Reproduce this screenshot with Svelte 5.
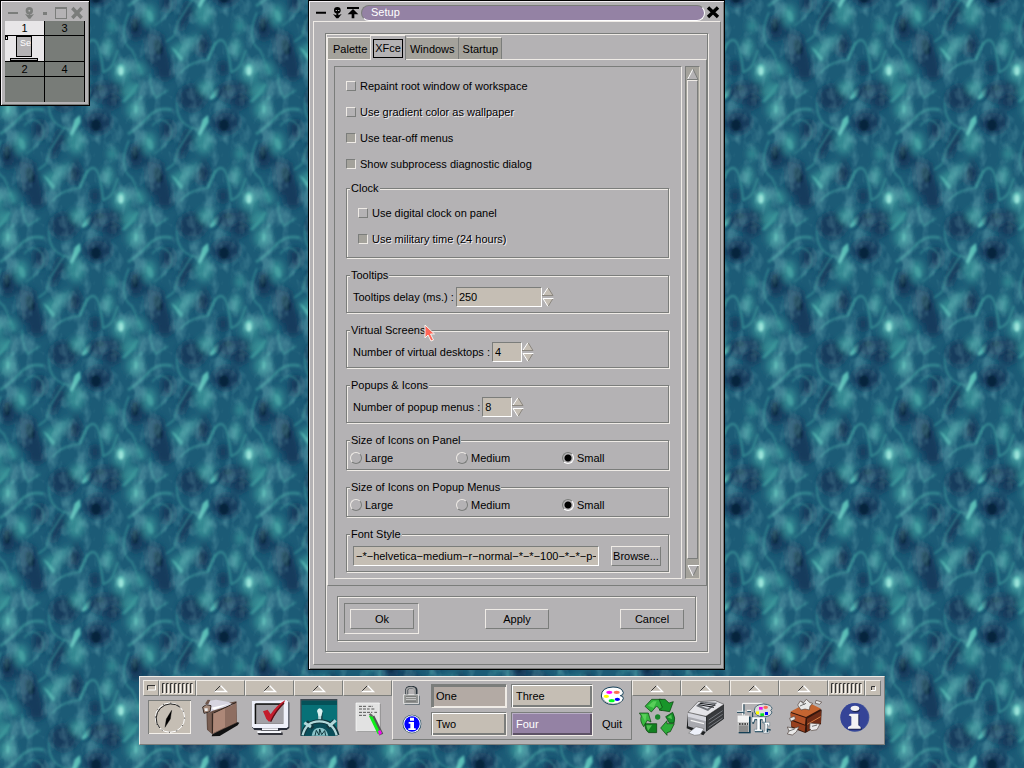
<script>
  const tabs = ['Palette', 'XFce', 'Windows', 'Startup'];
  let activeTab = $state('XFce');

  let options = $state([
    { label: 'Repaint root window of workspace', on: false, embossed: false },
    { label: 'Use gradient color as wallpaper', on: false, embossed: true },
    { label: 'Use tear-off menus', on: true, embossed: false },
    { label: 'Show subprocess diagnostic dialog', on: true, embossed: false }
  ]);
  let clock = $state([
    { label: 'Use digital clock on panel', on: false, embossed: false },
    { label: 'Use military time (24 hours)', on: true, embossed: true }
  ]);
  let spins = $state([
    { id: 'delay', legend: 'Tooltips', label: 'Tooltips delay (ms.) :', value: 250, wide: true },
    { id: 'desks', legend: 'Virtual Screens', label: 'Number of virtual desktops :', value: 4, wide: false },
    { id: 'menus', legend: 'Popups & Icons', label: 'Number of popup menus :', value: 8, wide: false }
  ]);
  const sizes = ['Large', 'Medium', 'Small'];
  let sizeGroups = $state([
    { id: 'panel', legend: 'Size of Icons on Panel', value: 'Small' },
    { id: 'popup', legend: 'Size of Icons on Popup Menus', value: 'Small' }
  ]);
  let font = $state('−*−helvetica−medium−r−normal−*−*−100−*−*−p−*');
  let screen = $state('Four');
  const tiles = [-128, 0, 128];
</script>

{#snippet check(item)}
  <label class="check" class:embossed={item.embossed}>
    <input type="checkbox" bind:checked={item.on} />{item.label}
  </label>
{/snippet}

{#snippet popup(name)}
  <button class="strip pop" aria-label={name}>
    <svg width="16" height="9" viewBox="0 0 16 9"><path d="M1.5 7.5L7.500 1.500" stroke="#333" fill="none" /><path d="M7.500 1.500L13.500 7.500H1.500" stroke="#fff" stroke-width="1.300" fill="none" /></svg>
  </button>
{/snippet}

{#snippet grip()}
  <div class="strip grip"><svg width="32" height="11" viewBox="0 0 32 11">
    {#each [0, 1, 2, 3, 4, 5, 6, 7] as i}
      <path d="M{i * 4 + 0.5} 10V.5h2" stroke="#333" fill="none" /><path d="M{i * 4 + 2.5} 1v9.500h-2" stroke="#f6f2ec" fill="none" />
    {/each}
  </svg></div>
{/snippet}

<main class="desktop">
  <svg class="wallpaper" aria-hidden="true">
    <defs>
      <filter id="soft" x="-20%" y="-20%" width="140%" height="140%"><feGaussianBlur stdDeviation="3.4" /></filter>
      <filter id="fine" x="-20%" y="-20%" width="140%" height="140%"><feGaussianBlur stdDeviation="1.3" /></filter>
      <filter id="ripple" x="0" y="0" width="100%" height="100%">
        <feTurbulence type="fractalNoise" baseFrequency=".07 .05" numOctaves="3" seed="4" stitchTiles="stitch" />
        <feColorMatrix values="0 0 0 0 .26  0 0 0 0 .62  0 0 0 0 .64  3.2 0 0 0 -1.45" />
      </filter>
      <g id="water">
        <g filter="url(#soft)">
          <g fill="#123a5c">
            <ellipse cx="8" cy="22" rx="14" ry="12" /><ellipse cx="46" cy="56" rx="8" ry="13" />
            <path d="M54 58L72 62 82 92 76 108 58 90Z" /><path d="M114 58L121 72 118 84 104 82Z" />
            <ellipse cx="102" cy="126" rx="14" ry="13" /><path d="M97 26L104 38 92 60 86 56Z" />
            <ellipse cx="78" cy="30" rx="7" ry="11" /><ellipse cx="16" cy="120" rx="18" ry="10" />
            <ellipse cx="75" cy="101" rx="9" ry="7" /><ellipse cx="22" cy="2" rx="8" ry="7" /><ellipse cx="5" cy="96" rx="5" ry="8" />
          </g>
          <g fill="#348a93">
            <path d="M80 76L110 60 92 92Z" /><ellipse cx="59" cy="43" rx="7" ry="11" /><ellipse cx="114" cy="42" rx="9" ry="12" />
            <ellipse cx="32" cy="100" rx="10" ry="11" /><ellipse cx="45" cy="10" rx="9" ry="10" /><ellipse cx="18" cy="76" rx="6" ry="10" />
            <ellipse cx="40" cy="118" rx="10" ry="7" transform="rotate(-40 40 118)" /><ellipse cx="22" cy="54" rx="5" ry="7" />
            <ellipse cx="117" cy="116" rx="9" ry="8" /><ellipse cx="50" cy="97" rx="5" ry="8" transform="rotate(-25 50 97)" />
          </g>
        </g>
        <g filter="url(#fine)" fill="#041c30" opacity=".75">
          <ellipse cx="6" cy="25" rx="5" ry="6" /><ellipse cx="45" cy="53" rx="3" ry="7" />
          <ellipse cx="68" cy="75" rx="4" ry="8" transform="rotate(-15 68 75)" /><ellipse cx="24" cy="127" rx="3" ry="4" />
          <ellipse cx="112" cy="74" rx="3" ry="5" opacity=".5" /><ellipse cx="10" cy="116" rx="4" ry="3" opacity=".6" />
        </g>
        <g filter="url(#fine)" fill="none" stroke="#3f9c9e" stroke-width="1.800" opacity=".62">
          <path d="M-10 88Q-4 68 3 68T13 100Q20 98 23 92L28 78" stroke-width="2.400" /><path d="M38 34Q48 28 58 17T82 10" stroke-width="3" />
          <path d="M39 40Q33 54 34 64T42 78L52 102" /><path d="M87 2Q86 14 92 21T107 29L111 38" />
          <path d="M90 102Q98 90 118 88L126 70" /><path d="M60 102Q60 116 66 126L78 118" />
          <path d="M34 130L48 112M42 138L52 124" stroke-width="3" /><path d="M76 70L84 64 88 50 102 28" />
          <path d="M62 26Q72 14 80 26T64 54" stroke-width="1.300" /><path d="M32 2L46 -10" />
        </g>
        <g filter="url(#fine)" fill="#5cc0b8">
          <path d="M118 15L119 22 110 36 108 34 113 19Z" /><ellipse cx="125" cy="122" rx="2.500" ry="7" transform="rotate(42 125 122)" />
          <ellipse cx="31" cy="98" rx="4" ry="6" /><ellipse cx="31" cy="99" rx="2" ry="4" fill="#a4eee0" /><ellipse cx="46" cy="9" rx="2" ry="4" opacity=".7" />
          <ellipse cx="60" cy="44" rx="3" ry="6" transform="rotate(-20 60 44)" opacity=".4" /><path d="M81 75L86 78 93 86 91 90Z" opacity=".7" />
        </g>
      </g>
      <pattern id="tile" x="90" y="100" width="128" height="128" patternUnits="userSpaceOnUse">
        <rect width="128" height="128" fill="#1c5b76" />
        {#each tiles as x}{#each tiles as y}<use href="#water" {x} {y} />{/each}{/each}
        <rect width="128" height="128" filter="url(#ripple)" opacity=".3" />
      </pattern>
    </defs>
    <rect width="100%" height="100%" fill="url(#tile)" />
  </svg>

  <section class="window pager" aria-label="Pager">
    <div class="pager-title">
      <svg width="80" height="18" viewBox="15 9 240 54" fill="#7b7d7b">
        <path d="M24 36h30v6H24zM129 36h12v9h-12z" /><circle cx="88" cy="32" r="11" /><path d="M75 42l11 3v-6h5v6l11-3-11 14h-5z" /><circle cx="88" cy="32" r="3" fill="#b4b2b4" />
        <path d="M165 21h36v36h-36zM168 27v27h30V27z" fill-rule="evenodd" /><path d="M217 24l28 30M245 24l-28 30" stroke="#7b7d7b" stroke-width="10" />
      </svg>
    </div>
    <div class="screens">
      <span class="num on">1</span><span class="num">3</span>
      <div class="view on">
        <i class="dot"></i><i class="mini">Se</i><i class="dock"></i>
      </div><div class="view"></div>
      <span class="num">2</span><span class="num">4</span>
      <div class="view"></div><div class="view"></div>
    </div>
  </section>

  <section class="window setup" aria-label="Setup">
    <header class="title">
      <svg width="48" height="18" viewBox="24 9 144 54" aria-hidden="true">
        <path d="M33 35h30v6H33zM126 21h36v6h-36z" /><circle cx="97" cy="31" r="10" /><path d="M84 42l10 4v-6h6v6l10-4-10 13h-6zM144 27l16 16h-12v12h-8V43h-12z" /><path d="M92 30h4v3h-4zM99 30h4v3h-4z" fill="#b4b2b4" />
      </svg>
      <h1>Setup</h1>
      <button class="close" aria-label="Close"><svg width="14" height="14" viewBox="0 0 14 14"><path d="M2 2.500L12 12M12 2.500L2 12" stroke="#000" stroke-width="3.400" /></svg></button>
    </header>
    <div class="pane">
      <div class="etched shell">
        <div class="tabs" role="tablist">
          {#each tabs as t}
            <button role="tab" class="tab" class:active={t === activeTab} aria-selected={t === activeTab} onclick={() => (activeTab = t)}><span>{t}</span></button>
          {/each}
        </div>
        <div class="page">
          <div class="view-frame">
            {#each options as item}{@render check(item)}{/each}
            <div class="groups">
              <fieldset class="etched indent">
                <legend>Clock</legend>
                {#each clock as item}{@render check(item)}{/each}
              </fieldset>
              {#each spins as s}
                <fieldset class="etched">
                  <legend>{s.legend}</legend>
                  <div class="spin">
                    <label for={s.id}>{s.label}</label>
                    <input id={s.id} class="text" class:wide={s.wide} type="text" inputmode="numeric" bind:value={s.value} />
                    <div class="arrows">
                      <button aria-label="Increase" onclick={() => s.value++}><svg width="12" height="10" viewBox="0 0 12 10"><path d="M1 9L6 .5 11 9Z" fill="#c5beb4" /><path d="M.8 8.500L6 .5" stroke="#fff" /><path d="M6 .5L11 8.500H0" stroke="#8b877f" fill="none" /></svg></button>
                      <button aria-label="Decrease" onclick={() => s.value--}><svg width="12" height="10" viewBox="0 0 12 10"><path d="M1 1L6 9.500 11 1Z" fill="#c5beb4" /><path d="M6 9.500L11 1.500" stroke="#8b877f" /><path d="M11.500 1.500H1L6 9.500" stroke="#fff" fill="none" /></svg></button>
                    </div>
                  </div>
                </fieldset>
              {/each}
              {#each sizeGroups as g}
                <fieldset class="etched radios">
                  <legend>{g.legend}</legend>
                  <div class="row">
                    {#each sizes as s}
                      <label><input type="radio" name={g.id} value={s} bind:group={g.value} />{s}</label>
                    {/each}
                  </div>
                </fieldset>
              {/each}
              <fieldset class="etched">
                <legend>Font Style</legend>
                <div class="font">
                  <input class="text" type="text" aria-label="Font Style" bind:value={font} />
                  <button class="push">Browse...</button>
                </div>
              </fieldset>
            </div>
          </div>
          <div class="scroll">
            <button aria-label="Scroll up"><svg width="12" height="12" viewBox="0 0 12 12"><path d="M1 11.500L6 1 11 11.500Z" fill="#b4b2b4" /><path d="M.8 11L6 1" stroke="#fff" /><path d="M6 1L11 11.500H0" stroke="#7b7d7b" fill="none" /></svg></button>
            <div class="thumb"></div>
            <button aria-label="Scroll down"><svg width="12" height="12" viewBox="0 0 12 12"><path d="M1 .5L6 11 11 .5Z" fill="#b4b2b4" /><path d="M6 11L11.200 .5" stroke="#7b7d7b" /><path d="M12 .5H1L6 11" stroke="#fff" fill="none" /></svg></button>
          </div>
        </div>
        <div class="etched actions">
          <div class="slot default"><button class="push">Ok</button></div>
          <div class="slot"><button class="push">Apply</button></div>
          <div class="slot"><button class="push">Cancel</button></div>
        </div>
      </div>
    </div>
  </section>

  <div class="dock-area">
    <nav class="panel" aria-label="Panel">
      <div class="side">
        <div class="strips">
          <button class="strip first" aria-label="Iconify"><svg width="9" height="6" viewBox="0 0 9 6"><path d="M.5 5V.5H8" stroke="#333" fill="none" /><path d="M8.500 .5v4.500H1" stroke="#fff" fill="none" /></svg></button>
          {@render grip()}
          {@render popup('Files menu')}{@render popup('Settings menu')}{@render popup('Network menu')}{@render popup('Editor menu')}
        </div>
        <div class="launchers">
          <button aria-label="Clock"><svg width="52" height="44" viewBox="24 75 156 132">
            <path d="M39 87h129v102H39z" fill="#7b7d7b" /><path d="M42 90h126v99H42z" fill="#f4f0ea" /><path d="M42 90h123v96H42z" fill="#c5beb4" />
            <circle cx="105" cy="140" r="44" fill="none" stroke="#fff" stroke-width="3" /><path d="M74 171A44 44 0 0 1 136 109" fill="none" stroke="#222" stroke-width="3" /><circle cx="105" cy="140" r="44" fill="none" stroke="#222" stroke-width="3" stroke-dasharray="3 20" />
            <path d="M110 118l-16 26-4 25 16-25z" stroke="#000" />
          </svg></button>
          <button aria-label="Files"><svg width="49" height="44" viewBox="180 75 147 132">
            <path d="M232 190l70-38 11 3-5 8-54 32-24 1z" fill="#111" /><path d="M214 116l24-12 66-13 2 64-74 35-16-14z" fill="#634d43" />
            <path d="M235 126l67-30 2 57-70 34z" fill="#ad8878" /><path d="M270 110l34-14v56l-34 18z" fill="#8e6e61" /><path d="M217 120l15 6v62l-12-10z" fill="#7a5f53" />
            <path d="M205 107l16-17 22-4 38 7 14 8-62 18-12 6z" fill="#d6d4e0" /><path d="M229 110l53-12-45 18z" fill="#fff" />
            <path d="M203 108l11-7 14 3-3 18-18 5z" fill="#a48a7b" stroke="#382e29" stroke-width="3" /><path d="M210 98l8-12 8 1-6 13z" fill="#6c554a" /><path d="M208 112h10v8h-8z" fill="#eee" />
            <path d="M232 127v60M236 126l68-32" stroke="#2b201b" stroke-width="3" fill="none" />
          </svg></button>
          <button aria-label="Settings"><svg width="49" height="44" viewBox="327 75 147 132">
            <path d="M356 91l100-4 7 8v76l-8 6H358l-6-8z" fill="#262b38" /><path d="M351 90l104-3 5 4v76l-5 4H355l-4-5z" fill="#eef0fa" /><path d="M361 99h84v60h-84z" fill="#777" /><path d="M365 102h80v56h-80z" fill="#a1a0a6" />
            <path d="M361 99h84M361 99v60" stroke="#111" stroke-width="4" /><path d="M383 176h48l12 9v7h-72l-4-7z" fill="#33343b" /><path d="M381 172h48v6h-48zM367 180h72v6h-72z" fill="#f5f6fb" />
            <path d="M384 121l14-5 9 14q18-28 44-43l-5 11q-23 24-35 49l-9 5-8-8z" fill="#c41d2d" /><path d="M407 152q16-34 40-56" stroke="#541017" stroke-width="4" fill="none" />
          </svg></button>
          <button aria-label="Network"><svg width="49" height="44" viewBox="474 75 147 132">
            <path d="M496 84h111v111H496z" fill="#404850" /><path d="M500 89h106v105H500z" fill="#087177" /><path d="M500 89h106v13H500z" fill="#055158" /><path d="M500 180q10-30 50-32t56 32v14H500z" fill="#0a4d59" />
            <g fill="none" stroke="#12363e" stroke-width="13"><path d="M503 193q10-42 52-42t52 42M556 122v32M514 152l20 20M598 150l-20 20" /></g>
            <g fill="none" stroke="#b2d8da" stroke-width="7"><path d="M503 193q10-42 50-42t52 42" /><path d="M554 145v-25M528 168l-20-13M582 166l20-18" stroke-width="9" /></g>
            <path d="M546 120q2-8 8-8t9 8l-4 16h-8z" fill="#daf0f0" /><path d="M530 194q3-24 24-24t26 24" fill="#8bc3c8" /><path d="M540 194l4-16 8 14 2-18 6 17 9-12 3 15" fill="none" stroke="#10363c" stroke-width="3" />
          </svg></button>
          <button aria-label="Editor"><svg width="49" height="44" viewBox="621 75 147 132">
            <path d="M667 99h70v83h-70z" fill="#8a8a8a" /><path d="M663 96h70v83h-70z" fill="#e2e2e2" stroke="#fff" stroke-width="2" />
            <path d="M672 106h22m6 0h14M684 106M672 114h32m5 0h12M672 124h40m6 0h8M672 133h24" stroke="#555" stroke-width="3" stroke-dasharray="9 3" />
            <path d="M712 136l27 55" stroke="#555" stroke-width="13" /><path d="M706 133l26 54" stroke="#0df01a" stroke-width="9" /><path d="M701 131l5-4 8 6-3 5z" fill="#666" /><path d="M728 181l8-4 5 9-7 7z" fill="#f40cf0" />
          </svg></button>
        </div>
      </div>

      <div class="centre">
        <button class="icon" aria-label="Lock"><svg width="18" height="20" viewBox="55 43 54 60">
          <path d="M60 72h45v27H60z" fill="#2c3e48" /><path d="M57 69h45v27H57z" fill="#909290" stroke="#e6e6e6" stroke-width="3" /><path d="M66 68V54q2-7 12-7h6q10 2 10 9v12" fill="none" stroke="#27323a" stroke-width="9" /><path d="M66 68V54q2-6 12-6h4q9 1 9 8v12" fill="none" stroke="#a6a6a6" stroke-width="5" /><path d="M64 76h30M64 82h30M64 88h30" stroke="#555" stroke-width="2" /><path d="M64 78h30M64 84h30" stroke="#fff" stroke-width="2" />
        </svg></button>
        <button class="desk" class:current={screen === 'One'} class:dim={true} onclick={() => (screen = 'One')}>One</button>
        <button class="desk" class:current={screen === 'Three'} onclick={() => (screen = 'Three')}>Three</button>
        <button class="icon" aria-label="Palette"><svg width="24" height="20" viewBox="647 42 72 60">
          <path d="M651 72q0-26 35-27 27 0 31 17 0 8-9 9 9 1 9 8-3 16-31 19-33-2-35-26z" fill="#fff" stroke="#123d56" stroke-width="3" /><path d="M655 76q5 18 31 20 18 0 27-8" fill="none" stroke="#9a9a9a" stroke-width="2" />
          <ellipse cx="675" cy="61" rx="9" ry="5" fill="#f0f" /><ellipse cx="697" cy="61" rx="9" ry="5" fill="#ff7052" /><ellipse cx="666" cy="73" rx="8" ry="5" fill="#ff0" /><ellipse cx="682" cy="86" rx="9" ry="5" fill="#0f2" /><ellipse cx="699" cy="82" rx="8" ry="5" fill="#00f" />
        </svg></button>
        <button class="icon" aria-label="Information"><svg width="20" height="20" viewBox="49 127 60 60">
          <circle cx="79" cy="157" r="28" fill="#123d56" /><circle cx="79" cy="157" r="26" fill="#fff" /><circle cx="79" cy="157" r="23" fill="#00f" /><path d="M73 138h12v9H73zM69 151h16v19h5v5H68v-5h6v-14h-5z" fill="#fff" />
        </svg></button>
        <button class="desk" class:current={screen === 'Two'} onclick={() => (screen = 'Two')}>Two</button>
        <button class="desk" class:current={screen === 'Four'} onclick={() => (screen = 'Four')}>Four</button>
        <button class="icon">Quit</button>
      </div>

      <div class="side">
        <div class="strips">
          {@render popup('Trash menu')}{@render popup('Print menu')}{@render popup('Tools menu')}{@render popup('Misc menu')}
          {@render grip()}
          <button class="strip last" aria-label="Close panel"><svg width="5" height="5" viewBox="0 0 5 5"><path d="M.5 4V.5H4" stroke="#333" fill="none" /><path d="M4.500 .5v4H0" stroke="#fff" fill="none" /></svg></button>
        </div>
        <div class="launchers">
          <button aria-label="Trash"><svg width="49" height="44" viewBox="6 75 147 132">
            <g stroke="#083d0b" stroke-width="2"><path d="M45 106l20-21h28l12 6 0 20-12 8-13-14-16 18z" fill="#2fb23c" /><path d="M87 85h18l12 11 13-4-11 30-32-5 10-8z" fill="#18952a" />
            <path d="M28 126h27l8 27-11-5-11 19q-13-18-7-32z" fill="#38b840" /><path d="M45 158h35v27H56q-12-8-11-27z" fill="#128020" /><path d="M92 171l19-22v9h22l-12 24-10 3v8z" fill="#2dae39" /><path d="M107 137l21-13q10 18 4 32h-14z" fill="#15902a" /></g>
            <circle cx="83" cy="138" r="8" fill="#18852a" /><path d="M54 104l16-13h10l-9 20zM49 163h17l-12 17M34 130h16l-4 22M112 139l12-8 2 14M96 94l12 10" fill="#69da65" opacity=".7" />
          </svg></button>
          <button aria-label="Print"><svg width="49" height="44" viewBox="153 75 147 132">
            <path d="M174 127l48 8 60-35v43l-54 39-8 11-50-21z" fill="#1e2022" /><path d="M174 124l30-32 52-3 26 11-54 36z" fill="#e4e4e8" stroke="#555" stroke-width="2" /><path d="M198 105l16-13 48 3-28 25z" fill="#6e7176" /><path d="M205 101l17-6 31 5-21 13z" fill="#d9dbe2" /><path d="M206 101l46 8M210 97l46 6" stroke="#17191c" stroke-width="3" />
            <path d="M174 126l54 12v45l-54-17z" fill="#a8a9af" /><path d="M174 126l54 12v13l-54-14z" fill="#d5d6dd" /><path d="M182 148l40 10" stroke="#f5f5f5" stroke-width="4" /><path d="M230 137l52-35v40l-52 38z" fill="#383a3d" /><path d="M236 147l42-28M236 158l42-28M236 169l42-28" stroke="#777a80" stroke-width="3" />
            <path d="M176 186l22-19 24 6-12 18-16 2z" fill="#eef1fa" stroke="#777" stroke-width="2" />
          </svg></button>
          <button aria-label="Tools"><svg width="49" height="44" viewBox="300 75 147 132">
            <path d="M321 121h22m8-3h12M338 134V97h60M343 124v10M338 121h8" stroke="#fff" stroke-width="3" fill="none" /><path d="M321 124h20M352 122h11M342 100v30M368 138v-14" stroke="#164055" stroke-width="3" fill="none" />
            <path d="M373 118q1-18 28-19 25 2 25 14-8 6 0 10-2 13-24 15-29-2-29-20z" fill="#ddd" stroke="#496878" stroke-width="3" /><path d="M387 108h11v8h-11z" fill="#e30fe8" /><ellipse cx="407" cy="109" rx="7" ry="5" fill="#ff6c55" /><path d="M378 121h9v9h-9z" fill="#ff0" /><path d="M391 127h11v8h-11z" fill="#06df20" /><path d="M405 123h9v9h-9z" fill="#00f" />
            <path d="M326 137h36v50h-36z" fill="#164055" /><path d="M323 134h34v49h-34z" fill="#c9c9c9" /><path d="M323 134h34v19h-34z" fill="#f2f2f2" /><path d="M326 163h29v20h-29z" fill="#8c8c8c" /><path d="M327 159h27" stroke="#222" stroke-width="4" stroke-dasharray="5 3" />
            <path d="M367 141h41v17h-6l-3-10h-6v29h6v7h-24v-7h7v-29h-7l-3 10h-5z" fill="#164055" /><path d="M366 138h40v16h-6l-3-9h-7v30h7v6h-24v-6h8v-30h-7l-3 9h-5zM396 154h23v11h-4l-3-6v22h5v5h-17v-5h5v-22z" fill="#fff" stroke="#164055" stroke-width="1" /><path d="M412 184v-9l10 2" fill="none" stroke="#164055" stroke-width="4" />
          </svg></button>
          <button aria-label="Misc"><svg width="49" height="44" viewBox="447 75 147 132">
            <path d="M482 124l52-24 41 16-2 43-47 27-42-16z" fill="#34160c" /><path d="M481 122l53-28 39 19-45 25z" fill="#c46531" /><path d="M481 125l46 16-2 20-42-16z" fill="#b25228" /><path d="M484 149l42 15-2 19-40-17z" fill="#97401e" /><path d="M531 143l42-24v37l-42 26z" fill="#6e2c16" /><path d="M532 160l40-23" stroke="#d37b42" stroke-width="3" />
            <g fill="#e9e9e9" stroke="#50423c" stroke-width="2"><path d="M503 102l8-12 10 5 8-10 11 10 8 2-8 9-2 11-13-3-12 3z" /><path d="M558 88l17 5-6 7-13-3z" /><path d="M479 141l15-5 2 9-14 6z" /><path d="M472 168l21 4 14-5-8 16-12 9-15-3 5-9z" /><path d="M540 156l30 3-9 17-17 3-5-7z" /></g>
            <path d="M477 180l17-6M546 166l15-4M510 105l18-8M514 92l9 9" stroke="#333" stroke-width="2" />
          </svg></button>
          <button aria-label="Help"><svg width="53" height="44" viewBox="594 75 159 132">
            <circle cx="675" cy="139" r="43" fill="#46589c" /><circle cx="673" cy="139" r="42" fill="#354497" /><ellipse cx="677" cy="115" rx="13" ry="9" fill="#1c2550" /><ellipse cx="675" cy="112" rx="13" ry="8" fill="#f2f2f4" /><path d="M663 131h25v34l7 5v6h-39v-6l10-5v-25l-8-4z" fill="#1c2550" /><path d="M660 128h25v35l7 5v5h-38v-5l10-5v-26l-8-4z" fill="#f2f2f4" />
          </svg></button>
        </div>
      </div>
    </nav>
  </div>

  <svg class="cursor" width="13" height="19" viewBox="0 0 13 19" aria-hidden="true"><path d="M1 1L10.500 10H6.500L9.500 16 7 17 4 11 1 14Z" fill="#ff6456" stroke="#f5f5f0" /></svg>
</main>

<style>
  :global(body) { margin: 0; background: #1d6078; }
  .desktop {
    --face: #b4b2b4; --dark: #7b7d7b; --light: #efebe6; --sand: #c5beb4; --trough: #a4a29b; --violet: #9482a4;
    position: relative; min-height: 100vh; overflow: hidden; color: #000;
    font: 11px/12px "Liberation Sans", Arial, sans-serif;
  }
  .desktop * { box-sizing: border-box; }
  button, input { font: inherit; color: inherit; margin: 0; padding: 0; border-radius: 0; }
  button { border: 0; background: none; }
  svg { display: block; }
  .wallpaper { position: absolute; width: 100%; height: 100%; }
  .window { position: absolute; top: 0; background: var(--face); border: 1px solid #000; box-shadow: inset 1px 1px 0 #f4f0f4, inset -1px -1px 0 var(--dark); }

  .pager { left: 0; width: 90px; padding: 2px 4px 3px; }
  .pager-title { height: 18px; }
  .screens { display: grid; grid-template-columns: 1fr 1fr; }
  .num, .view { border-right: 1px solid #000; border-bottom: 1px solid #000; background: #787c78; }
  .num { height: 15px; line-height: 15px; text-align: center; }
  .view { height: 26px; }
  .view:nth-last-child(-n + 2) { height: 25px; border-bottom: 0; }
  .screens .on { background: #e8e6e8; }
  .view.on { position: relative; }
  .view i { position: absolute; font-style: normal; }
  .dot { left: 0; top: 0; width: 3px; height: 4px; border: 1px solid #000; }
  .mini { left: 11px; top: 0; width: 16px; height: 21px; border: 1px solid #000; background: var(--face); color: #fff; font-size: 9px; padding-left: 3px; overflow: hidden; }
  .dock { left: 5px; top: 22px; width: 28px; height: 3px; border: 1px solid #000; background: var(--face); }

  .setup { left: 308px; width: 417px; padding: 1px 3px 4px 4px; }
  .title { display: flex; align-items: center; height: 19px; }
  .title h1 { flex: 1; height: 16px; margin: 2px 0 0; padding-left: 9px; font: inherit; line-height: 13px; color: #fff; background: var(--violet); border: 1px solid; border-color: var(--dark) #fff #fff var(--dark); border-radius: 8px; }
  .close { width: 16px; padding-left: 1px; }
  .pane { border: 1px solid; border-color: var(--light) var(--dark) var(--dark) var(--light); padding: 11px 12px 12px 11px; }
  .etched { border: 1px solid var(--dark); box-shadow: 1px 1px 0 var(--light), inset 1px 1px 0 var(--light); }
  .shell { padding: 1px 0 10px 1px; }
  .tabs { display: flex; align-items: flex-end; height: 24px; }
  .tab { position: relative; height: 22px; padding: 0 3px; background: var(--trough); border: 1px solid; border-color: var(--light) var(--dark) transparent transparent; border-bottom: 0; }
  .tab:first-child { border-left-color: var(--light); padding-left: 5px; border-right: 0; }
  .tab.active { z-index: 1; height: 25px; margin-bottom: -1px; padding: 0 2px; background: var(--face); border-left-color: var(--light); }
  .tab.active span { display: block; border: 1px solid #000; padding: 2px 1px 3px; }
  .page { display: flex; gap: 3px; padding: 6px; border: 1px solid; border-color: var(--light) var(--dark) var(--dark) var(--light); }
  .view-frame { flex: 1; min-width: 0; padding: 6px 11px 6px; border: 1px solid; border-color: var(--dark) var(--light) var(--light) var(--dark); }
  .check { display: flex; align-items: center; gap: 4px; height: 26px; }
  .embossed { text-shadow: 1px 1px 0 #efebef; }
  input[type='checkbox'] { appearance: none; width: 10px; height: 10px; border: 1px solid; border-color: var(--light) var(--dark) var(--dark) var(--light); }
  input[type='checkbox']:checked { background: var(--trough); border-color: var(--dark) var(--light) var(--light) var(--dark); }
  .groups { display: flex; flex-direction: column; gap: 11px; margin-top: 5px; }
  fieldset { margin: 0 1px 0 0; min-width: 0; padding: 6px 7px 5px 6px; }
  .indent { padding-left: 11px; }
  legend { height: 12px; margin-left: -3px; padding: 0 1px; background: var(--face); }
  .indent legend { margin-left: -8px; }
  .spin, .font { display: flex; align-items: center; }
  .text { height: 20px; width: 30px; margin-left: 2px; padding: 0 2px; background: var(--sand); border: 1px solid; border-color: var(--dark) #fff #fff var(--dark); outline: 0; }
  .text.wide { width: 86px; }
  .font .text { flex: 1; min-width: 0; margin: 0 12px 0 0; }
  .arrows button { display: block; width: 12px; height: 10px; }
  .radios { padding-left: 3px; }
  .radios legend { margin-left: 0; }
  .row { display: grid; grid-template-columns: repeat(3, 106px); }
  .row label { display: flex; gap: 3px; }
  input[type='radio'] { appearance: none; width: 12px; height: 12px; border: 1px solid; border-radius: 50%; border-color: var(--light) var(--dark) var(--dark) var(--light); }
  input[type='radio']:checked { background: radial-gradient(circle, #000 3px, transparent 4px); border-color: var(--dark) #fff #fff var(--dark); }
  .push { height: 20px; padding: 0 2px; border: 1px solid; border-color: var(--light) var(--dark) var(--dark) var(--light); }
  .font .push { width: 50px; padding: 0; }
  .scroll { display: flex; flex-direction: column; justify-content: space-between; width: 15px; padding: 1px; background: var(--trough); border: 1px solid; border-color: var(--dark) #d4d0c6 #d4d0c6 var(--dark); }
  .scroll button { height: 12px; }
  .thumb { flex: 1; margin-bottom: 6px; background: var(--face); border: 1px solid; border-color: var(--light) var(--dark) var(--dark) var(--light); }
  .actions { display: flex; justify-content: space-between; margin: 10px 11px 0 10px; padding: 6px; }
  .slot { width: 75px; padding: 5px 5px 4px; border: 1px solid transparent; }
  .slot.default { border-color: var(--dark) var(--light) var(--light) var(--dark); }
  .slot .push { display: block; width: 64px; }

  .dock-area { position: absolute; left: 0; right: 0; bottom: 23px; display: flex; justify-content: center; }
  .panel { display: flex; padding: 3px 3px 4px; background: var(--face); border: 1px solid; border-color: var(--light) var(--dark) var(--dark) var(--light); }
  .strips, .launchers { display: flex; }
  .strip { display: grid; place-items: center; height: 16px; background: var(--sand); border: 1px solid; border-color: var(--light) var(--dark) var(--dark) var(--light); }
  .pop { width: 49px; }
  .grip { width: 37px; }
  .first { width: 16px; }
  .last { width: 16px; }
  .centre { display: grid; grid-template-columns: 38px 80px 82px 38px; row-gap: 4px; align-items: center; padding: 3px 0; border: 1px solid; border-color: var(--light) var(--dark) var(--dark) var(--light); }
  .centre .icon { display: grid; place-items: center; height: 24px; }
  .desk { height: 24px; padding-left: 4px; text-align: left; background: var(--sand); border: 1px solid; border-color: var(--dark) var(--light) var(--light) var(--dark); box-shadow: inset 1px 1px 0 #fff, inset -2px -2px 0 var(--dark); }
  .desk:nth-child(4n + 2) { margin-right: 4px; }
  .desk.dim { background: #b3aaa4; box-shadow: inset 2px 2px 0 var(--dark), inset -1px -1px 0 var(--light); }
  .desk.current { background: var(--violet); color: #fff; box-shadow: inset 1px 1px 0 #b9aec6, inset -2px -2px 0 #5d5266; }
  .cursor { position: absolute; left: 424px; top: 324px; }
</style>
